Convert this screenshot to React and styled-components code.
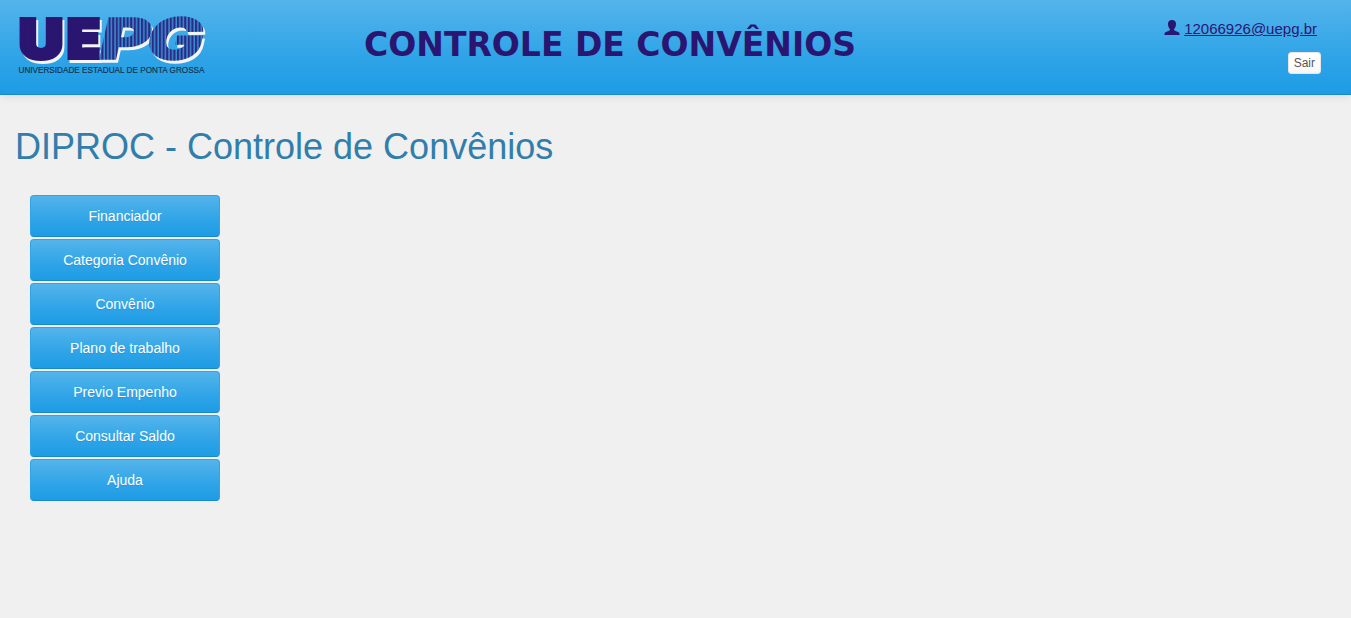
import React from 'react';
import styled, { createGlobalStyle } from 'styled-components';

const GlobalStyle = createGlobalStyle`
  *, *::before, *::after { box-sizing: border-box; }
  body {
    margin: 0;
    background: #f0f0f0;
    font: 14px/20px "Liberation Sans", Arial, sans-serif;
    color: #555;
  }
`;

const blueGradient = 'linear-gradient(#54b4eb, #2fa4e7 60%, #1d9ce5)';

const Header = styled.header`
  display: flex;
  align-items: flex-start;
  height: 95px;
  padding: 0 30px 0 15px;
  background: ${blueGradient};
  border-bottom: 1px solid #178acc;
  box-shadow: 0 1px 10px rgba(0, 0, 0, 0.1);
`;

const Logo = styled.svg`
  flex: none;
  display: block;
  width: 194px;
  height: 90px;
`;

const Letters = styled.g`
  filter: drop-shadow(2.2px 3px 0 #f2f6fa);
`;

const Mark = styled.text`
  font-family: Inter, "Liberation Sans", sans-serif;
  font-weight: 900;
  font-style: ${(p) => (p.$slanted ? 'italic' : 'normal')};
  font-size: ${(p) => (p.$slanted ? 56 : 53)}px;
  fill: ${(p) => (p.$slanted ? 'url(#stripes)' : '#2a1570')};
  stroke: ${(p) => (p.$slanted ? 'url(#stripes)' : '#2a1570')};
  stroke-width: ${(p) => (p.$slanted ? 1.5 : 4)}px;
`;

const Tagline = styled.text`
  font: 8.3px "Liberation Sans", Arial, sans-serif;
  fill: #14304a;
  stroke: #14304a;
  stroke-width: 0.15px;
`;

const SystemName = styled.div`
  margin: 22px 0 0 155px;
  flex: 1;
  font: bold 33px/46px "DejaVu Sans", Verdana, sans-serif;
  color: #2a1570;
  white-space: nowrap;
`;

const Account = styled.div`
  display: flex;
  flex-direction: column;
  align-items: flex-end;
  padding-top: 18px;
`;

const User = styled.div`
  display: flex;
  gap: 4px;
  margin-right: 4px;
  color: #2a1570;
  font-size: 15px;
  line-height: 21px;
`;

const UserIcon = styled.svg`
  display: block;
  width: 16px;
  height: 15px;
  margin-top: 2px;
`;

const UserLink = styled.a`
  color: inherit;
  text-decoration: underline;
`;

const LogoutButton = styled.button`
  height: 22px;
  margin-top: 13px;
  padding: 1px 5px;
  border: 1px solid #e6e6e6;
  border-radius: 3px;
  background: linear-gradient(#fff, #fff 60%, #f5f5f5);
  color: #555;
  font: 12px/18px "Liberation Sans", Arial, sans-serif;
`;

const Heading = styled.h1`
  margin: 32px 15px 0;
  font-size: 36px;
  font-weight: 400;
  line-height: 40px;
  color: #317eac;
`;

const Menu = styled.nav`
  display: flex;
  flex-direction: column;
  gap: 2px;
  width: 190px;
  margin: 28px 0 0 30px;
`;

const MenuItem = styled.a`
  height: 42px;
  border: 1px solid #2fa4e7;
  border-bottom-color: #178acc;
  border-radius: 4px;
  background: ${blueGradient};
  color: #fff;
  line-height: 40px;
  text-align: center;
  text-shadow: 0 1px 0 rgba(0, 0, 0, 0.1);
`;

const items = [
  'Financiador', 'Categoria Convênio', 'Convênio', 'Plano de trabalho',
  'Previo Empenho', 'Consultar Saldo', 'Ajuda',
];

const marks = [
  { char: 'U', x: 4, y: 57.5, width: 44 },
  { char: 'E', x: 52, y: 57.5, width: 33 },
  { char: 'P', x: 85, y: 58.5, width: 50, slanted: true },
  { char: 'G', x: 132, y: 58.5, width: 56, slanted: true },
];

function UepgLogo() {
  return (
    <Logo viewBox="0 0 194 90" role="img" aria-label="UEPG">
      <defs>
        <pattern id="stripes" width="3.6" height="90" patternUnits="userSpaceOnUse">
          <rect width="3.6" height="90" fill="#398ed3" />
          <rect width="2.1" height="90" fill="#2b2a84" />
        </pattern>
      </defs>
      <Letters>
        {marks.map((m) => (
          <Mark
            key={m.char}
            $slanted={m.slanted}
            x={m.x}
            y={m.y}
            textLength={m.width}
            lengthAdjust="spacingAndGlyphs"
          >
            {m.char}
          </Mark>
        ))}
      </Letters>
      <Tagline x="3.5" y="73" textLength="186" lengthAdjust="spacingAndGlyphs">
        UNIVERSIDADE ESTADUAL DE PONTA GROSSA
      </Tagline>
    </Logo>
  );
}

export default function App() {
  return (
    <>
      <GlobalStyle />
      <Header>
        <UepgLogo />
        <SystemName>CONTROLE DE CONVÊNIOS</SystemName>
        <Account>
          <User>
            <UserIcon viewBox="0 0 16 15" aria-hidden="true">
              <path fill="currentColor" d="M8 0C5.500 0 4 1.500 4 3.800c0 2 .6 4.200 1.900 5.200v1.200L1.600 12.200C.8 12.600.5 13 .5 13.700V15h15v-1.300c0-.7-.3-1.100-1.100-1.500L10.100 10.200V9c1.300-1 1.900-3.200 1.900-5.200C12 1.500 10.500 0 8 0z" />
            </UserIcon>
            <UserLink>12066926@uepg.br</UserLink>
          </User>
          <LogoutButton>Sair</LogoutButton>
        </Account>
      </Header>
      <Heading>DIPROC - Controle de Convênios</Heading>
      <Menu>
        {items.map((item) => (
          <MenuItem key={item}>{item}</MenuItem>
        ))}
      </Menu>
    </>
  );
}
